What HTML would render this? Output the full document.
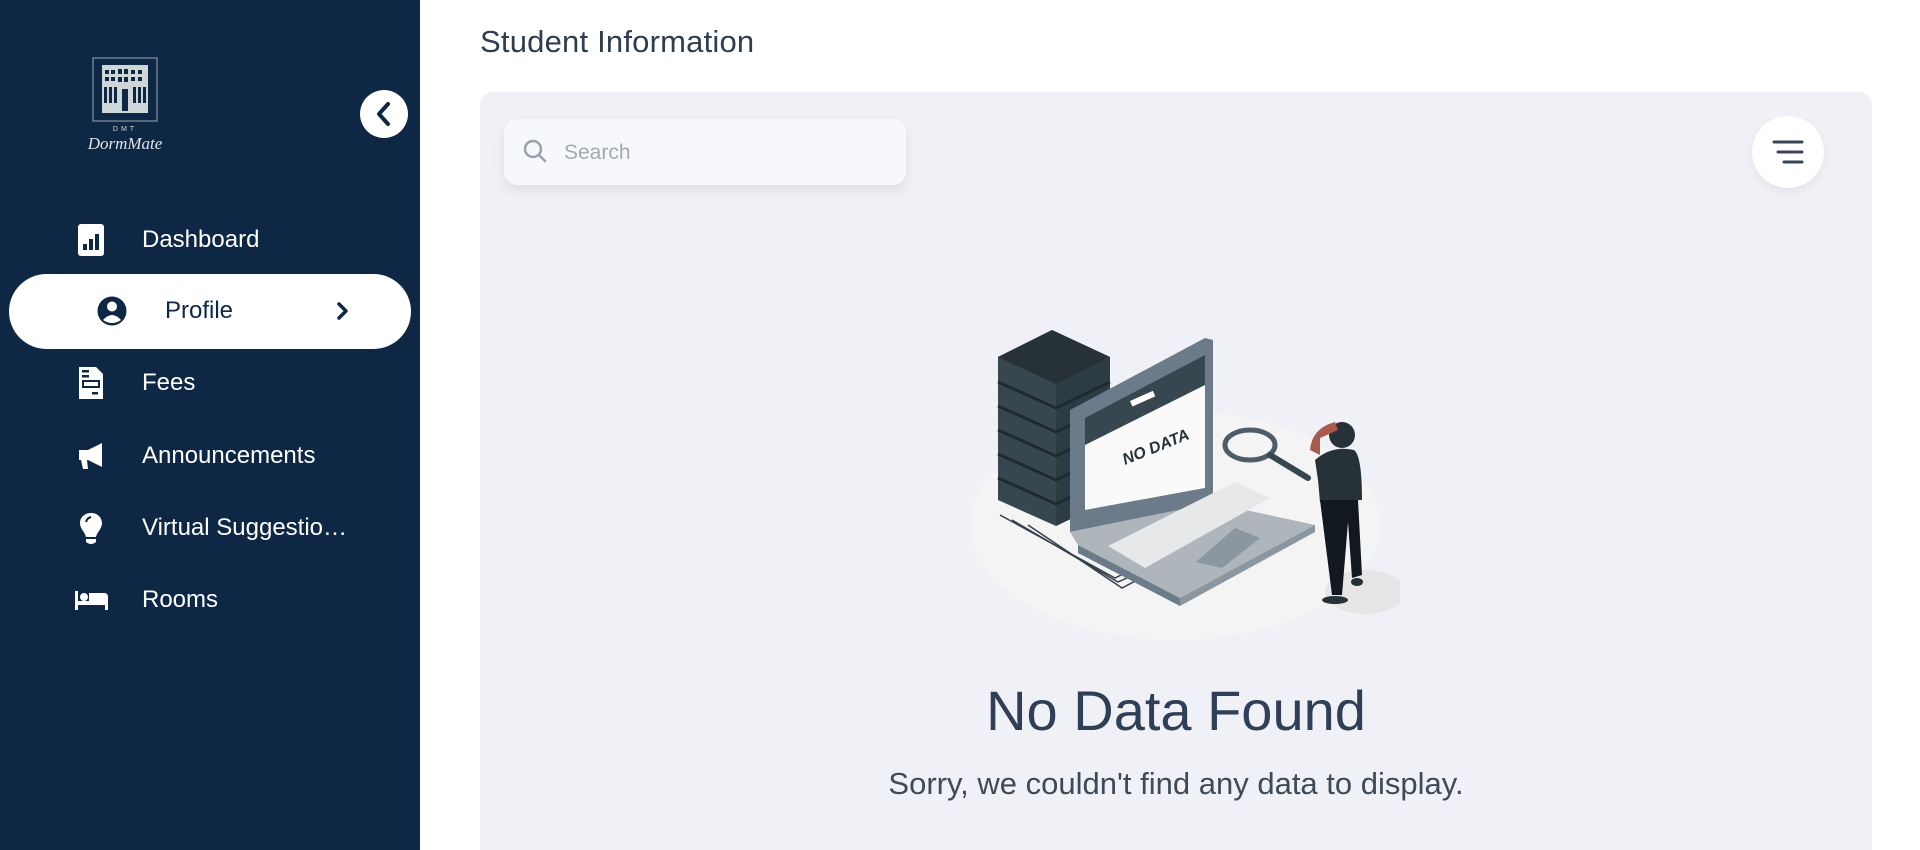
<!DOCTYPE html>
<html><head><meta charset="utf-8"><style>
*{margin:0;padding:0;box-sizing:border-box}
html,body{width:1920px;height:850px;overflow:hidden}
body{background:#fff;font-family:"Liberation Sans",sans-serif;position:relative}
.sb{position:absolute;left:0;top:0;width:420px;height:850px;background:#0d2744}
.item{position:absolute;left:0;width:420px;color:#fff;font-size:24px}
.item .t{position:absolute;left:142px;top:-14px;line-height:28px;white-space:nowrap}
.item svg{position:absolute;left:76px;top:-17px}
.pill{position:absolute;left:9px;top:274px;width:402px;height:75px;background:#fff;border-radius:38px}
.toggle{position:absolute;left:360px;top:90px;width:48px;height:48px;border-radius:50%;background:#fff}
h1{position:absolute;left:480px;top:24px;font-weight:normal;font-size:31px;color:#2f3d4f;letter-spacing:.2px}
.card{position:absolute;left:480px;top:92px;width:1392px;height:758px;background:#f0f1f6;border-radius:12px 12px 0 0}
.search{position:absolute;left:504px;top:119px;width:402px;height:66px;background:#f7f8fb;border-radius:13px;box-shadow:0 6px 12px rgba(0,0,0,.08)}
.search span{position:absolute;left:60px;top:22px;font-size:21px;color:#a3a8b3}
.filt{position:absolute;left:1752px;top:116px;width:72px;height:72px;border-radius:50%;background:#fff;box-shadow:0 4px 10px rgba(0,0,0,.06)}
.nd{position:absolute;left:480px;width:1392px;text-align:center;color:#2e3f56}
</style></head><body>
<div class="sb">
  <svg style="position:absolute;left:78px;top:55px" width="100" height="96" viewBox="0 0 100 96">
    <rect x="15" y="3" width="64" height="63" fill="none" stroke="#9aa6b4" stroke-width="1"/>
    <rect x="24" y="10" width="46" height="48" fill="#cfd6d8"/>
    <g fill="#0d2744">
      <rect x="27" y="15" width="4" height="4"/><rect x="33" y="15" width="4" height="4"/><rect x="40" y="14" width="4" height="5"/><rect x="46" y="14" width="4" height="5"/><rect x="53" y="15" width="4" height="4"/><rect x="60" y="15" width="4" height="4"/>
      <rect x="27" y="22" width="4" height="4"/><rect x="33" y="22" width="4" height="4"/><rect x="40" y="22" width="4" height="5"/><rect x="46" y="22" width="4" height="5"/><rect x="53" y="22" width="4" height="4"/><rect x="60" y="22" width="4" height="4"/>
      <rect x="26" y="32" width="3" height="16"/><rect x="31" y="32" width="3" height="16"/><rect x="36" y="32" width="3" height="16"/><rect x="44" y="34" width="6" height="22"/><rect x="55" y="32" width="3" height="16"/><rect x="60" y="32" width="3" height="16"/><rect x="65" y="32" width="3" height="16"/>
    </g>
    <text x="47" y="76" fill="#cfd6d8" font-size="7" text-anchor="middle" letter-spacing="3">DMT</text>
    <text x="47" y="94" fill="#dfe4e6" font-size="17" font-style="italic" font-family="Liberation Serif,serif" text-anchor="middle">DormMate</text>
  </svg>
  <div class="toggle"><svg width="48" height="48" viewBox="0 0 48 48"><path d="M28 14 L19 24 L28 34" fill="none" stroke="#0d2744" stroke-width="4" stroke-linecap="round" stroke-linejoin="round"/></svg></div>
  <div class="item" style="top:240px"><svg width="30" height="34" viewBox="0 0 30 34"><rect x="2" y="1" width="26" height="32" rx="3" fill="#fff"/><rect x="7" y="21" width="4" height="6" fill="#0d2744"/><rect x="13" y="16" width="4" height="11" fill="#0d2744"/><rect x="19" y="11" width="4" height="16" fill="#0d2744"/></svg><span class="t">Dashboard</span></div>
  <div class="pill"></div>
  <div class="item" style="top:311px;color:#0d2744"><svg style="left:97px" width="30" height="34" viewBox="0 0 30 34"><circle cx="15" cy="17" r="14.5" fill="#0d2744"/><circle cx="15" cy="12.5" r="5" fill="#fff"/><path d="M6 26 Q15 16 24 26 Q15 32 6 26Z" fill="#fff"/></svg><span class="t" style="left:165px">Profile</span><svg style="left:333px" width="20" height="34" viewBox="0 0 20 34"><path d="M6 10 L13 17 L6 24" fill="none" stroke="#0d2744" stroke-width="3.5" stroke-linecap="round" stroke-linejoin="round"/></svg></div>
  <div class="item" style="top:383px"><svg width="30" height="34" viewBox="0 0 30 34"><path d="M3 1H20L27 8V33H3Z" fill="#fff"/><g fill="#0d2744"><rect x="6" y="4" width="7" height="2.5"/><rect x="6" y="9" width="7" height="2.5"/><rect x="7" y="15" width="16" height="6" fill="none" stroke="#0d2744" stroke-width="2"/><rect x="16" y="26" width="6" height="2.5"/></g></svg><span class="t">Fees</span></div>
  <div class="item" style="top:456px"><svg width="34" height="34" viewBox="0 0 34 34"><path d="M3 11H12L26 4V28L12 21H11L12 30H7L5 21H3Z" fill="#fff"/></svg><span class="t">Announcements</span></div>
  <div class="item" style="top:528px"><svg width="30" height="36" viewBox="0 0 30 36"><path d="M15 2C8 2 4 7 4 12C4 18 9 21 10 26H20C21 21 26 18 26 12C26 7 22 2 15 2Z" fill="#fff"/><path d="M10 28H20V31Q15 35 10 31Z" fill="#fff"/><path d="M10 11Q11 7 15 6" fill="none" stroke="#0d2744" stroke-width="2"/></svg><span class="t">Virtual Suggestio…</span></div>
  <div class="item" style="top:600px"><svg style="left:74px" width="36" height="34" viewBox="0 0 36 34"><rect x="1" y="8" width="3" height="19" fill="#fff"/><circle cx="10" cy="14" r="4" fill="#fff"/><path d="M15 10H30Q34 10 34 14V27H31V22H4V18H15Z" fill="#fff"/></svg><span class="t">Rooms</span></div>
</div>
<h1>Student Information</h1>
<div class="card"></div>
<div class="search"><svg style="position:absolute;left:18px;top:19px" width="28" height="28" viewBox="0 0 28 28"><circle cx="11" cy="11" r="8" fill="none" stroke="#9aa0ac" stroke-width="2.5"/><path d="M17 17L23 23" stroke="#9aa0ac" stroke-width="2.5" stroke-linecap="round"/></svg><span>Search</span></div>
<div class="filt"><svg width="72" height="72" viewBox="0 0 72 72"><path d="M22 26H50M26 36H50M32 46H50" stroke="#3a4656" stroke-width="3" stroke-linecap="round"/></svg></div>
<svg style="position:absolute;left:960px;top:310px" width="440" height="340" viewBox="0 0 440 340">
  <ellipse cx="215" cy="215" rx="205" ry="115" fill="#f4f4f4"/>
  <ellipse cx="405" cy="282" rx="40" ry="22" fill="#e6e6e6"/>
  <g fill="none" stroke="#33414f" stroke-width="1.5"><path d="M40 205L155 268L175 258"/><path d="M52 210L158 272L180 262"/><path d="M68 215L162 278L185 266"/></g>
  <g>
    <path d="M38 47L92 20L150 47L150 190L96 216L38 190Z" fill="#37474f"/>
    <path d="M96 74L150 47L150 190L96 216Z" fill="#2d3b43"/>
    <g stroke="#1f2a30" stroke-width="3" fill="none"><path d="M38 72L96 98L150 72"/><path d="M38 96L96 122L150 96"/><path d="M38 120L96 146L150 120"/><path d="M38 144L96 170L150 144"/><path d="M38 168L96 194L150 168"/></g>
    <path d="M38 47L92 20L150 47L96 74Z" fill="#263238"/>
  </g>
  <path d="M110 100L245 28L253 30L253 193L110 222Z" fill="#6b7b89"/>
  <path d="M125 108L245 45L245 178L125 200Z" fill="#37474f"/>
  <path d="M125 135L245 75L245 178L125 200Z" fill="#fafafa"/>
  <rect x="170" y="91" width="25" height="6" fill="#fff" transform="rotate(-24 170 91)"/>
  <text x="165" y="155" font-size="16" fill="#263238" font-weight="bold" font-style="italic" transform="rotate(-22 165 155)">NO DATA</text>
  <path d="M110 222L253 193L355 215L220 288L118 235Z" fill="#aeb5bb"/>
  <path d="M118 235L220 288L220 296L118 243Z" fill="#6b7b89"/>
  <path d="M220 288L355 215L355 222L220 296Z" fill="#8a96a0"/>
  <path d="M148 236L275 172L310 188L185 258Z" fill="#e6e8ea"/>
  <path d="M236 252L275 218L300 228L262 258Z" fill="#8a96a0"/>
  <ellipse cx="290" cy="135" rx="25" ry="15" fill="none" stroke="#4e5c68" stroke-width="5"/>
  <path d="M310 145L348 168" stroke="#37474f" stroke-width="6" stroke-linecap="round"/>
  <path d="M355 150Q372 135 394 140Q402 146 402 190L360 192L358 170Z" fill="#263238"/>
  <path d="M360 190L398 190L402 265L392 268L388 212L382 285L372 285Z" fill="#111820"/>
  <circle cx="382" cy="125" r="13" fill="#263238"/>
  <path d="M350 140Q352 118 375 112L378 120L360 128L360 145Z" fill="#a85a4d"/>
  <ellipse cx="375" cy="290" rx="13" ry="4" fill="#263238"/>
  <ellipse cx="397" cy="272" rx="6" ry="4" fill="#263238"/>
</svg>
<div class="nd" style="top:678px;font-size:56px">No Data Found</div>
<div class="nd" style="top:766px;font-size:31px;color:#3f4a58">Sorry, we couldn't find any data to display.</div>
</body></html>
